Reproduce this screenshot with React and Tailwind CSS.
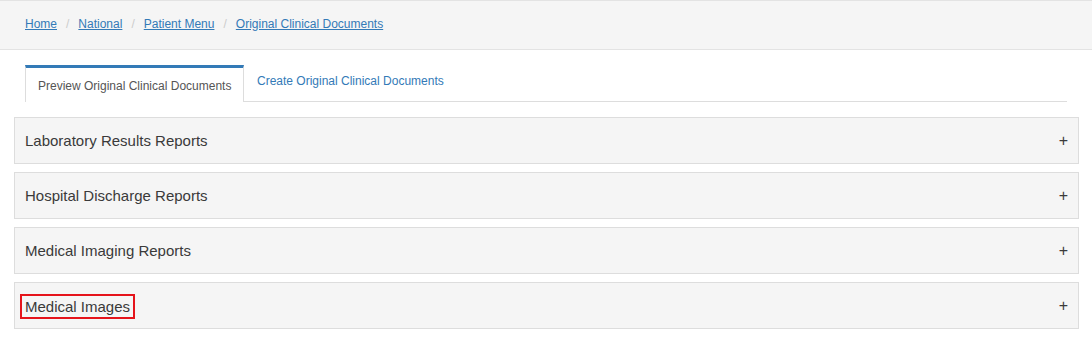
import React from 'react';

const crumbs = ['Home', 'National', 'Patient Menu', 'Original Clinical Documents'];

const sections = [
  'Laboratory Results Reports',
  'Hospital Discharge Reports',
  'Medical Imaging Reports',
  'Medical Images',
];

const App = () => {
  return (
    <div className="min-h-screen bg-white" style={{ fontFamily: '"Liberation Sans", Arial, sans-serif' }}>
      {/* Breadcrumb bar */}
      <div className="h-[50px] bg-[#f5f5f5] border-t border-b border-[#e3e3e3] flex items-center px-[25px] pb-[3px]">
        <ol className="flex items-center text-[12px]">
          {crumbs.map((c, i) => (
            <li key={c} className="flex items-center">
              {i > 0 && <span className="text-[#cccccc] px-[9px]">/</span>}
              <a href="#" className="text-[#337ab7] underline">{c}</a>
            </li>
          ))}
        </ol>
      </div>

      {/* Tabs */}
      <div className="px-[25px] pt-[16px]">
        <div className="flex items-end border-b border-[#dddddd] h-[36px]">
          <div className="h-[37px] -mb-px bg-white border-x border-[#dddddd] border-t-[3px] border-t-[#337ab7] w-[219px] flex items-center pl-[12px] pt-[1px] text-[12px] text-[#555555]">
            Preview Original Clinical Documents
          </div>
          <a href="#" className="self-stretch flex items-center pl-[13px] pb-[6px] text-[12px] text-[#337ab7]">
            Create Original Clinical Documents
          </a>
        </div>
      </div>

      {/* Panels */}
      <div className="pl-[14px] pr-[13px] pt-[15px] flex flex-col gap-[8px]">
        {sections.map((s, i) => (
          <div key={s} className="h-[47px] bg-[#f5f5f5] border border-[#dddddd] flex items-center justify-between pl-[10px] pr-[10px] pt-[1px] text-[#3a3a3a]">
            {i === 3 ? (
              <span className="text-[15px] leading-[19px] border-2 border-[#e5141b] px-[3px] py-[1px] -ml-[5px]">{s}</span>
            ) : (
              <span className="text-[15px]">{s}</span>
            )}
            <span className="text-[16px] leading-none font-light">+</span>
          </div>
        ))}
      </div>
    </div>
  );
};

export default App;
